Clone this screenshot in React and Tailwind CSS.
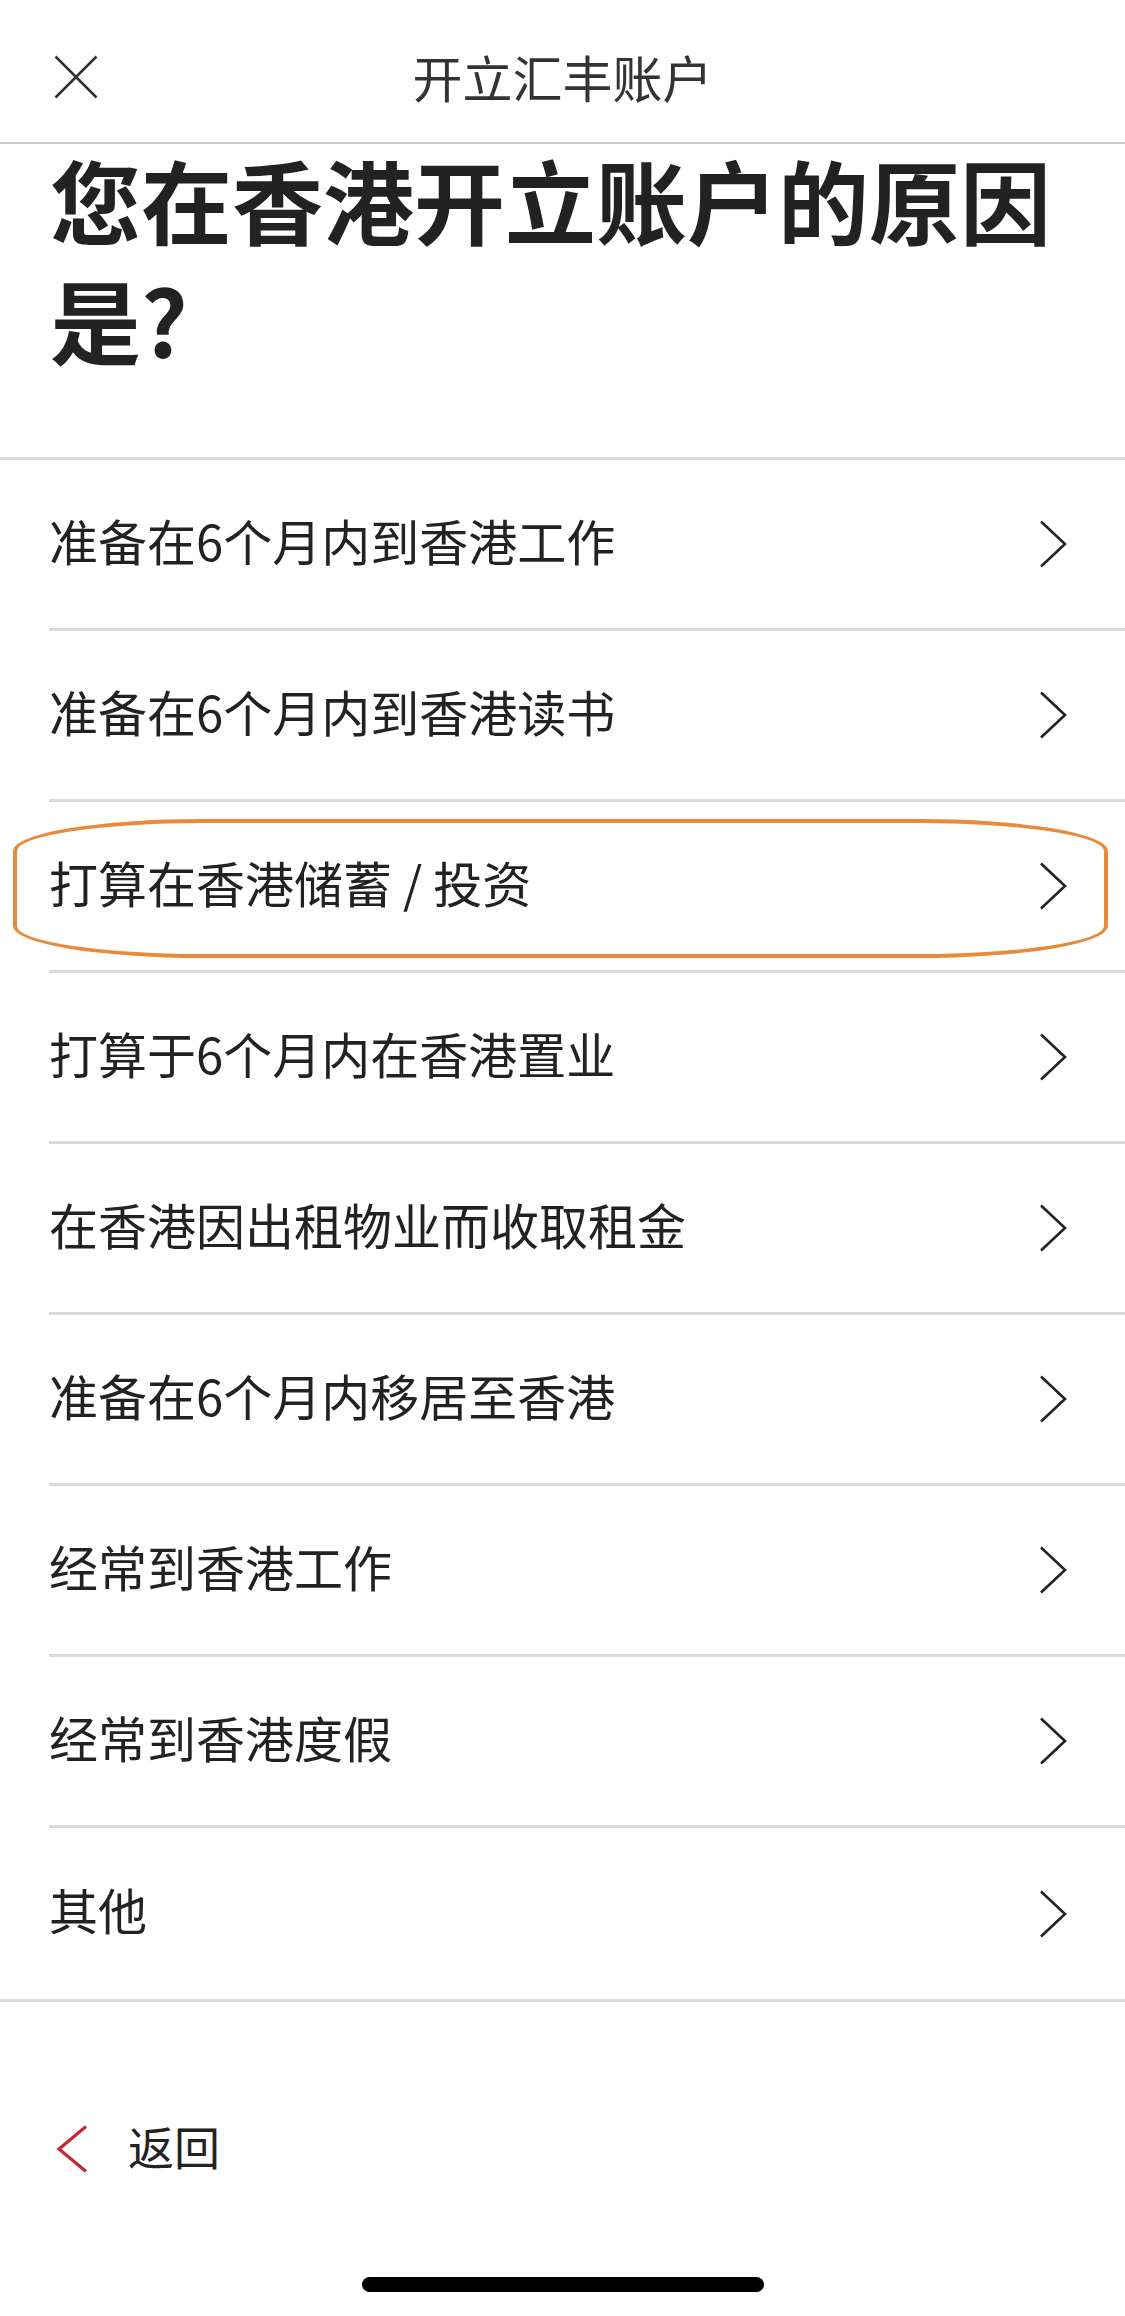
import React from 'react';

const reasons = [
  '准备在6个月内到香港工作',
  '准备在6个月内到香港读书',
  '打算在香港储蓄 / 投资',
  '打算于6个月内在香港置业',
  '在香港因出租物业而收取租金',
  '准备在6个月内移居至香港',
  '经常到香港工作',
  '经常到香港度假',
  '其他',
];

const font = { fontFamily: '"Noto Sans CJK SC", "Noto Sans", sans-serif' };

const Chevron = ({ className }) => (
  <svg viewBox="0 0 28 48" className={className} fill="none">
    <path d="M2 1.5 L26 24 L2 46.5" stroke="currentColor" strokeWidth="2.6" />
  </svg>
);

const App = () => {
  return (
    <div className="min-h-[2316px] w-[1125px] bg-white flex flex-col text-[#222]" style={font}>
      {/* top bar */}
      <div className="relative h-[144px] flex items-center justify-center pt-[10px] border-b-2 border-[#c9c9c9]">
        <button className="absolute left-[54px] top-[55px] w-[44px] h-[44px] text-[#333]">
          <svg viewBox="0 0 44 44" className="w-full h-full" fill="none">
            <path d="M1.5 1.5 L42.5 42.5 M42.5 1.5 L1.5 42.5" stroke="currentColor" strokeWidth="2.6" />
          </svg>
        </button>
        <h1 className="text-[50px] leading-none text-[#333]">开立汇丰账户</h1>
      </div>

      <h2 className="-mt-[6px] px-[50px] pb-[79px] text-[91px] leading-[120px] font-bold text-[#222] border-b-[3px] border-[#dadada]">
        您在香港开立账户的原因是?
      </h2>

      <ul className="border-b-[3px] border-[#dadada]">
        {reasons.map((r, i) => (
          <li key={r} className="relative pl-[49px]">
            <div
              className={`h-[171px] flex items-center justify-between pr-[58px] ${
                i < reasons.length - 1 ? 'border-b-[3px] border-[#dadada]' : ''
              }`}
            >
              <span className="block pb-[10px] text-[49px] leading-none">{r}</span>
              <Chevron className="w-[28px] h-[48px] text-[#222]" />
            </div>
            {i === 2 && (
              <div className="absolute left-[13px] right-[17px] top-[17px] h-[139px] border-[4px] border-[#e98a3b] rounded-[190px/32px] pointer-events-none" />
            )}
          </li>
        ))}
      </ul>

      <div className="flex items-center pl-[56px] pt-[120px] gap-[40px]">
        <svg viewBox="0 0 32 48" className="w-[32px] h-[48px]" fill="none">
          <path d="M30 1.5 L3 24 L30 46.5" stroke="#c4282e" strokeWidth="3.2" />
        </svg>
        <span className="block pb-[8px] text-[46px] leading-none text-[#222]">返回</span>
      </div>

      <div className="mt-auto pb-[24px] flex justify-center">
        <div className="w-[402px] h-[15px] rounded-full bg-black" />
      </div>
    </div>
  );
};

export default App;
